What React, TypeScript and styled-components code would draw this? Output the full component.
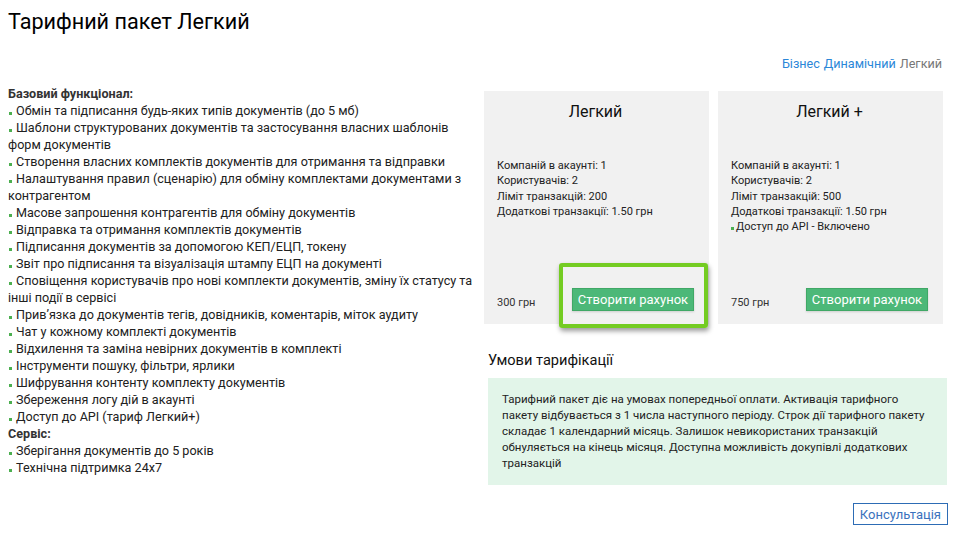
import React from "react";
import styled, { createGlobalStyle } from "styled-components";

const GlobalStyle = createGlobalStyle`
    html, body {
        margin: 0;
        padding: 0;
        background: #fff;
    }
    body {
        font-family: Roboto, "Noto Sans", Arial, sans-serif;
        color: #212121;
    }
`;

const Page = styled.div`
    width: 955px;
    padding: 0 8px;
    box-sizing: border-box;
`;

const Title = styled.h1`
    margin: 9px 0 0;
    font-size: 21.6px;
    line-height: 26px;
    font-weight: 400;
    color: #000;
`;

const Body = styled.div`
    display: grid;
    grid-template-columns: 476px 463px;
    margin-top: 20px;
`;

const FeatureColumn = styled.div`
    padding-top: 30px;
    font-size: 12.6px;
    line-height: 17px;
`;

const SectionLabel = styled.div`
    font-weight: 700;
    color: #333;
`;

const Feature = styled.div`
    &::before {
        content: "";
        display: inline-block;
        width: 3px;
        height: 3px;
        margin: 0 4px 0 1px;
        background: #4caf50;
        vertical-align: baseline;
    }
`;

const PlanColumn = styled.div`
    display: flex;
    flex-direction: column;
`;

const PlanLinks = styled.div`
    display: flex;
    justify-content: flex-end;
    gap: 4px;
    padding-right: 5px;
    font-size: 12.6px;
    line-height: 17px;
`;

const PlanLink = styled.a<{ $current?: boolean }>`
    color: ${(p) => (p.$current ? "#777" : "#2b87d8")};
    text-decoration: none;
    cursor: pointer;
`;

const Cards = styled.div`
    display: grid;
    grid-template-columns: 225px 225px;
    gap: 9px;
    margin-top: 19px;
`;

const Card = styled.div`
    display: flex;
    flex-direction: column;
    height: 233px;
    box-sizing: border-box;
    padding: 10px 15px 13px 13px;
    background: #f1f1f1;
`;

const CardTitle = styled.div`
    text-align: center;
    font-size: 16px;
    line-height: 22px;
    color: #111;
`;

const CardInfo = styled.div`
    margin-top: 35px;
    font-size: 11px;
    line-height: 15.3px;
    color: #222;
`;

const InfoBullet = styled.div`
    &::before {
        content: "";
        display: inline-block;
        width: 3px;
        height: 3px;
        margin-right: 2px;
        background: #4caf50;
        vertical-align: baseline;
    }
`;

const CardFooter = styled.div`
    display: flex;
    justify-content: space-between;
    align-items: flex-end;
    margin-top: auto;
`;

const Price = styled.div`
    font-size: 11px;
    line-height: 13px;
    color: #333;
    margin-bottom: 2px;
`;

const ButtonWrap = styled.span`
    position: relative;
    display: inline-flex;
`;

const CreateButton = styled.button`
    width: 122px;
    height: 23px;
    padding: 0;
    border: 1px solid #40a866;
    border-radius: 0;
    background: #4cb878;
    box-shadow: 0 1px 2px rgba(0, 0, 0, 0.15);
    font-family: inherit;
    font-size: 13px;
    color: #fff;
    cursor: pointer;
`;

const Highlight = styled.span`
    position: absolute;
    left: -13px;
    right: -14px;
    top: -25px;
    bottom: -17px;
    border: 4px solid #74cc22;
    border-radius: 3px;
    box-shadow: 1px 3px 5px rgba(0, 0, 0, 0.4);
    pointer-events: none;
`;

const Conditions = styled.div`
    padding-left: 4px;
    margin-top: 26px;
`;

const ConditionsTitle = styled.div`
    font-size: 14.6px;
    line-height: 20px;
    color: #111;
`;

const ConditionsBox = styled.div`
    margin-top: 8px;
    padding: 13px 14px 14px;
    background: #e2f5e9;
    font-size: 11.5px;
    line-height: 16px;
    color: #222;
`;

const Actions = styled.div`
    display: flex;
    justify-content: flex-end;
    margin-top: 18px;
    margin-right: -1px;
`;

const ConsultButton = styled.button`
    height: 22px;
    padding: 0 6px;
    border: 1px solid #2d6cb5;
    border-radius: 0;
    background: #fff;
    font-family: inherit;
    font-size: 13px;
    color: #3a72bd;
    cursor: pointer;
`;

const baseFeatures = [
    "Обмін та підписання будь-яких типів документів (до 5 мб)",
    "Шаблони структурованих документів та застосування власних шаблонів форм документів",
    "Створення власних комплектів документів для отримання та відправки",
    "Налаштування правил (сценарію) для обміну комплектами документами з контрагентом",
    "Масове запрошення контрагентів для обміну документів",
    "Відправка та отримання комплектів документів",
    "Підписання документів за допомогою КЕП/ЕЦП, токену",
    "Звіт про підписання та візуалізація штампу ЕЦП на документі",
    "Сповіщення користувачів про нові комплекти документів, зміну їх статусу та інші події в сервісі",
    "Прив’язка до документів тегів, довідників, коментарів, міток аудиту",
    "Чат у кожному комплекті документів",
    "Відхилення та заміна невірних документів в комплекті",
    "Інструменти пошуку, фільтри, ярлики",
    "Шифрування контенту комплекту документів",
    "Збереження логу дій в акаунті",
    "Доступ до API (тариф Легкий+)",
];

const serviceFeatures = ["Зберігання документів до 5 років", "Технічна підтримка 24x7"];

const plans = [
    { name: "Легкий", transactions: 200, price: "300 грн", api: false, highlighted: true },
    { name: "Легкий +", transactions: 500, price: "750 грн", api: true, highlighted: false },
];

const App: React.FC = () => {
    return (
        <Page>
            <GlobalStyle />
            <Title>Тарифний пакет Легкий</Title>
            <Body>
                <FeatureColumn>
                    <SectionLabel>Базовий функціонал:</SectionLabel>
                    {baseFeatures.map((f) => (
                        <Feature key={f}>{f}</Feature>
                    ))}
                    <SectionLabel>Сервіс:</SectionLabel>
                    {serviceFeatures.map((f) => (
                        <Feature key={f}>{f}</Feature>
                    ))}
                </FeatureColumn>

                <PlanColumn>
                    <PlanLinks>
                        <PlanLink>Бізнес</PlanLink>
                        <PlanLink>Динамічний</PlanLink>
                        <PlanLink $current>Легкий</PlanLink>
                    </PlanLinks>

                    <Cards>
                        {plans.map((plan) => (
                            <Card key={plan.name}>
                                <CardTitle>{plan.name}</CardTitle>
                                <CardInfo>
                                    <div>Компаній в акаунті: 1</div>
                                    <div>Користувачів: 2</div>
                                    <div>Ліміт транзакцій: {plan.transactions}</div>
                                    <div>Додаткові транзакції: 1.50 грн</div>
                                    {plan.api && <InfoBullet>Доступ до API - Включено</InfoBullet>}
                                </CardInfo>
                                <CardFooter>
                                    <Price>{plan.price}</Price>
                                    <ButtonWrap>
                                        <CreateButton>Створити рахунок</CreateButton>
                                        {plan.highlighted && <Highlight />}
                                    </ButtonWrap>
                                </CardFooter>
                            </Card>
                        ))}
                    </Cards>

                    <Conditions>
                        <ConditionsTitle>Умови тарифікації</ConditionsTitle>
                        <ConditionsBox>
                            Тарифний пакет діє на умовах попередньої оплати. Активація тарифного пакету відбувається з 1
                            числа наступного періоду. Строк дії тарифного пакету складає 1 календарний місяць. Залишок
                            невикористаних транзакцій обнуляється на кінець місяця. Доступна можливість докупівлі
                            додаткових транзакцій
                        </ConditionsBox>
                        <Actions>
                            <ConsultButton>Консультація</ConsultButton>
                        </Actions>
                    </Conditions>
                </PlanColumn>
            </Body>
        </Page>
    );
};

export default App;
